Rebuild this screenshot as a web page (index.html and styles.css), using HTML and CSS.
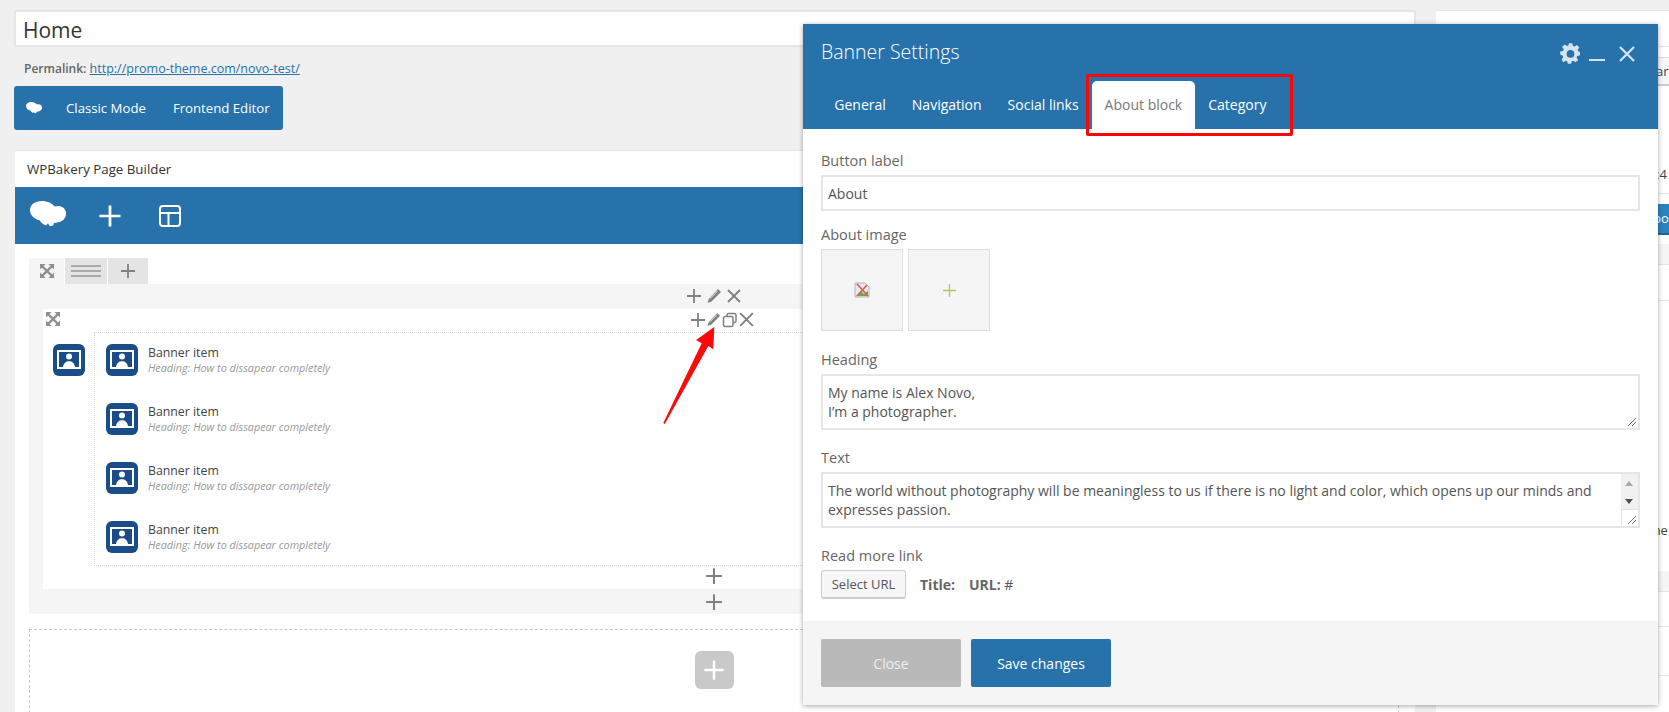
FILE: index.html
```html
<!DOCTYPE html>
<html lang="en">
<head>
  <meta charset="UTF-8">
  <meta name="viewport" content="width=device-width, initial-scale=1.0">
  <title>Edit Page</title>
  <link rel="stylesheet" href="styles.css">
</head>
<body>

  <svg class="defs" width="0" height="0">
    <symbol id="logo" viewBox="0 0 36 29">
      <path d="M12 0C5 0 0 3.800 0 9c0 5.200 4 9 9.500 10.200 1.500 2.400 3.800 4.300 6.800 5.300l1.600-2.300 1.900 3 3.300-.8 1-2.400c6.500-.2 12-3.400 12-9.300 0-4.700-3.200-7.800-8-7.800-1.200 0-2.400.2-3.500.6C22 2.300 17.500 0 12 0z"/>
    </symbol>
    <symbol id="plus" viewBox="0 0 16 16">
      <path d="M8 1v14M1 8h14" fill="none" stroke="currentColor" stroke-width="1.800"/>
    </symbol>
    <symbol id="pencil" viewBox="0 0 16 16">
      <path d="M12 1l3 3-9.500 9.500L1.500 15 3 10.500z" fill="currentColor"/>
      <path d="M3.800 10.800L11.500 3" stroke="#fff" stroke-width=".9"/>
    </symbol>
    <symbol id="close" viewBox="0 0 16 16">
      <path d="M2 2l12 12M14 2L2 14" fill="none" stroke="currentColor" stroke-width="1.800"/>
    </symbol>
    <symbol id="clone" viewBox="0 0 16 16">
      <path d="M5 4V3a1.500 1.500 0 0 1 1.500-1.500h6A1.500 1.500 0 0 1 14 3v6a1.500 1.500 0 0 1-1.500 1.500H11M3 4.500h6.500A1.500 1.500 0 0 1 11 6v7a1.500 1.500 0 0 1-1.500 1.500H3A1.500 1.500 0 0 1 1.500 13V6A1.500 1.500 0 0 1 3 4.500z" fill="none" stroke="currentColor" stroke-width="1.500"/>
    </symbol>
    <symbol id="expand" viewBox="0 0 15 15">
      <path d="M0 0h6L0 6zM15 0v6L9 0zM0 15V9l6 6zM15 15H9l6-6z" fill="currentColor"/>
      <path d="M2.500 2.500l10 10M12.500 2.500l-10 10" fill="none" stroke="currentColor" stroke-width="2.400"/>
    </symbol>
    <symbol id="banner" viewBox="0 0 32 32">
      <rect width="32" height="32" rx="6" fill="#1a4d87"/>
      <rect x="5" y="7" width="22" height="17" fill="none" stroke="#fff" stroke-width="2"/>
      <circle cx="16" cy="12.500" r="3" fill="#fff"/>
      <path d="M10 23c.6-3.800 3-5.800 6-5.800s5.400 2 6 5.800z" fill="#fff"/>
    </symbol>
  </svg>

  <div class="page">
    <main class="main-col">
      <div class="title-box">Home</div>
      <p class="permalink"><strong>Permalink:</strong> <a href="#">http://promo-theme.com/novo-test/</a></p>

      <div class="mode-bar">
        <svg class="mode-logo"><use href="#logo"/></svg>
        <span>Classic Mode</span>
        <span>Frontend Editor</span>
      </div>

      <section class="builder">
        <h2 class="builder-title">WPBakery Page Builder</h2>
        <div class="builder-nav">
          <svg class="nav-logo"><use href="#logo"/></svg>
          <svg class="nav-plus"><use href="#plus"/></svg>
          <svg class="nav-layout" viewBox="0 0 22 22">
            <rect x="1" y="1" width="20" height="20" rx="3" fill="none" stroke="#fff" stroke-width="2"/>
            <path d="M1 8h20M9.500 8v13" fill="none" stroke="#fff" stroke-width="2"/>
          </svg>
        </div>

        <div class="canvas">
          <div class="row-tabs">
            <span class="row-tab first"><svg class="ico-expand"><use href="#expand"/></svg></span>
            <span class="row-tab lines"><i></i><i></i><i></i></span>
            <span class="row-tab plus"><svg><use href="#plus"/></svg></span>
          </div>

          <div class="row">
            <div class="controls row-controls">
              <svg class="c-plus"><use href="#plus"/></svg>
              <svg class="c-pencil"><use href="#pencil"/></svg>
              <svg class="c-close"><use href="#close"/></svg>
            </div>

            <div class="column">
              <svg class="ico-expand col-expand"><use href="#expand"/></svg>
              <div class="controls col-controls">
                <svg class="c-plus"><use href="#plus"/></svg>
                <svg class="c-pencil"><use href="#pencil"/></svg>
                <svg class="c-clone"><use href="#clone"/></svg>
                <svg class="c-close"><use href="#close"/></svg>
              </div>

              <div class="col-body">
                <svg class="banner-ico parent-ico"><use href="#banner"/></svg>
                <div class="items">
                  <div class="item">
                    <svg class="banner-ico"><use href="#banner"/></svg>
                    <div class="item-text"><b>Banner item</b><em>Heading: How to dissapear completely</em></div>
                  </div>
                  <div class="item">
                    <svg class="banner-ico"><use href="#banner"/></svg>
                    <div class="item-text"><b>Banner item</b><em>Heading: How to dissapear completely</em></div>
                  </div>
                  <div class="item">
                    <svg class="banner-ico"><use href="#banner"/></svg>
                    <div class="item-text"><b>Banner item</b><em>Heading: How to dissapear completely</em></div>
                  </div>
                  <div class="item">
                    <svg class="banner-ico"><use href="#banner"/></svg>
                    <div class="item-text"><b>Banner item</b><em>Heading: How to dissapear completely</em></div>
                  </div>
                </div>
              </div>

              <div class="add-line inner-add"><svg><use href="#plus"/></svg></div>
            </div>

            <div class="add-line outer-add"><svg><use href="#plus"/></svg></div>
          </div>

          <div class="dropzone">
            <span class="big-add"><svg><use href="#plus"/></svg></span>
          </div>
        </div>
      </section>
    </main>

    <aside class="side-col">
      <div class="side-head"></div>
      <div class="side-select">ar</div>
      <div class="side-meta">:4</div>
      <div class="side-button">po</div>
      <div class="side-band first-band"></div>
      <div class="side-text">the</div>
      <div class="side-band second-band"></div>
      <div class="side-line"></div>
      <div class="side-line"></div>
    </aside>
  </div>

  <!-- Settings window -->
  <div class="modal">
    <div class="modal-head">
      <div class="modal-title-row">
        <h3>Banner Settings</h3>
        <div class="modal-icons">
          <svg class="m-gear" viewBox="0 0 24 24">
            <path d="M10 1h4l.7 3.200 1.900.8 2.800-1.800 2.800 2.800-1.800 2.800.8 1.900L23 11.400v3.800l-3.200.7-.8 1.900 1.800 2.800-2.800 2.800-2.800-1.800-1.900.8-.6 2.500h-3.800l-.7-2.500-1.900-.8-2.800 1.800L1.700 20l1.800-2.800-.8-1.900L0 14.600v-3.800l3.200-.7.800-1.900-1.800-2.800L5 2.600l2.800 1.800 1.900-.8z" transform="translate(.3 -.8) scale(.98)"/>
            <circle cx="12" cy="12.500" r="4.400" fill="#2772ab"/>
          </svg>
          <span class="m-min"></span>
          <svg class="m-close" viewBox="0 0 16 16"><path d="M1 1l14 14M15 1L1 15" fill="none" stroke="currentColor" stroke-width="2.200"/></svg>
        </div>
      </div>
      <ul class="modal-tabs">
        <li>General</li>
        <li>Navigation</li>
        <li>Social links</li>
        <li class="active">About block</li>
        <li>Category</li>
      </ul>
    </div>

    <div class="modal-body">
      <label class="field-label">Button label</label>
      <div class="field-input">About</div>

      <label class="field-label">About image</label>
      <div class="thumbs">
        <div class="thumb">
          <svg class="broken" viewBox="0 0 16 16">
            <path d="M1 1h10l4 4v10H1z" fill="#e8e8e8" stroke="#b5b5b5"/>
            <path d="M2 14l5-5 3 3 4-3v5z" fill="#6aa84f"/>
            <path d="M3 2l11 12M13 3L3 14" stroke="#e0605a" stroke-width="1.800"/>
          </svg>
        </div>
        <div class="thumb add-thumb"><svg viewBox="0 0 13 13"><path d="M6.500 0v13M0 6.500h13" stroke="#a9cc52" stroke-width="1.300"/></svg></div>
      </div>

      <label class="field-label">Heading</label>
      <div class="field-area">
        My name is Alex Novo,<br>I’m a photographer.
        <svg class="grip" viewBox="0 0 10 10"><path d="M9 1L1 9M9 5L5 9" stroke="#777" stroke-width="1"/></svg>
      </div>

      <label class="field-label">Text</label>
      <div class="field-area has-scroll">
        The world without photography will be meaningless to us if there is no light and color, which opens up our minds and expresses passion.
        <div class="scrollbar">
          <span class="arrow up"></span>
          <span class="arrow down"></span>
          <span class="corner"><svg class="grip" viewBox="0 0 10 10"><path d="M9 1L1 9M9 5L5 9" stroke="#777" stroke-width="1"/></svg></span>
        </div>
      </div>

      <label class="field-label">Read more link</label>
      <div class="link-row">
        <button class="url-btn">Select URL</button>
        <span class="link-info"><b>Title:</b></span>
        <span class="link-info"><b>URL:</b> #</span>
      </div>
    </div>

    <div class="modal-foot">
      <button class="foot-btn grey">Close</button>
      <button class="foot-btn blue">Save changes</button>
    </div>
  </div>

  <!-- Annotations drawn on top of the screenshot -->
  <div class="mark-box"></div>
  <svg class="mark-arrow" viewBox="0 0 60 110">
    <path d="M51.300 0L50.300 22.300 45.300 19 1.800 97 .3 96 38.700 16.300 33 13z" fill="#fa0a0a"/>
  </svg>

</body>
</html>
```

FILE: styles.css
```css
/* Reset and base styles */
* { margin: 0; padding: 0; box-sizing: border-box; }
html, body { width: 1669px; height: 712px; overflow: hidden; }
body { position: relative; background: #f0f0f0; font-family: "Open Sans", Arial, sans-serif; font-size: 13px; color: #555; }
.defs { position: absolute; }

.page { display: grid; grid-template-columns: 1402px 233px; column-gap: 20px; padding: 10px 0 0 14px; width: 1669px; height: 712px; overflow: hidden; }

/* Left column */
.title-box { height: 37px; border: 2px solid #e6e6e6; background: #fff; padding-left: 7px; font-size: 21px; line-height: 36px; color: #333; }
.permalink { margin-top: 13px; padding-left: 10px; font-size: 12.500px; line-height: 18px; color: #666; }
.permalink strong { font-size: 12px; font-weight: 600; }
.permalink a { color: #2772ab; }

.mode-bar { display: flex; align-items: center; width: 269px; height: 44px; margin-top: 8px; padding-left: 12px; background: #2772ab; border-radius: 3px; color: #fff; font-size: 13.200px; }
.mode-logo { width: 16px; height: 13px; fill: #fff; margin-right: 24px; }
.mode-bar span + span { margin-left: 27px; }

.builder { margin: 20px 0 0 1px; width: 1400px; height: 562px; background: #fff; border-top: 1px solid #e4e4e4; }
.builder-title { height: 36px; padding-left: 12px; font-size: 13.300px; font-weight: 500; line-height: 37px; color: #333; }
.builder-nav { display: flex; align-items: center; height: 57px; padding-left: 15px; background: #2772ab; }
.nav-logo { width: 36px; height: 29px; fill: #fff; }
.nav-plus { width: 24px; height: 24px; margin-left: 32px; color: #fff; }
.nav-layout { width: 22px; height: 22px; margin-left: 37px; }

.canvas { padding: 14px 14px 0; width: 1398px; }
.row-tabs { display: flex; height: 26px; }
.row-tab { display: flex; align-items: center; justify-content: center; background: #e4e4e4; margin-right: 1px; }
.row-tab.first { width: 35px; background: #f5f5f5; color: #8f8f8f; }
.row-tab.lines { width: 42px; flex-direction: column; gap: 3px; }
.row-tab.lines i { display: block; width: 30px; height: 2px; background: #aaa; }
.row-tab.plus { width: 40px; color: #808080; }
.row-tab.plus svg { width: 16px; height: 16px; }
.ico-expand { width: 14px; height: 14px; color: #8f8f8f; }

.row { height: 330px; background: #f5f5f5; padding: 0 0 0 14px; }
.controls { display: flex; align-items: center; justify-content: center; color: #808080; }
.row-controls { height: 25px; margin-left: -14px; padding-bottom: 2px; gap: 4px; }
.row-controls svg { width: 16px; height: 16px; }

.column { position: relative; height: 280px; background: #fff; }
.col-expand { position: absolute; left: 3px; top: 3px; }
.col-controls { height: 23px; padding: 0 0 2px 2px; }
.col-controls .c-plus { width: 16px; height: 16px; }
.col-controls .c-pencil { width: 15px; height: 15px; }
.col-controls .c-clone { width: 16px; height: 16px; margin-left: 1px; }
.col-controls .c-close { width: 17px; height: 17px; }

.col-body { display: flex; padding-left: 10px; }
.banner-ico { width: 32px; height: 32px; flex: none; }
.parent-ico { margin-top: 12px; }
.items { flex: 1; height: 234px; margin-left: 9px; border: 1px dotted #d4d4d4; padding: 11px 0 0 11px; display: flex; flex-direction: column; gap: 27px; }
.item { display: flex; align-items: center; gap: 10px; }
.item-text b { display: block; font-weight: 400; font-size: 12.300px; line-height: 15px; color: #444; }
.item-text em { display: block; font-size: 10.800px; line-height: 15px; color: #999; }

.add-line { display: flex; justify-content: center; color: #808080; }
.add-line svg { width: 18px; height: 18px; }
.inner-add { margin-left: -14px; padding-top: 1px; height: 23px; }
.outer-add { margin-left: -14px; padding-top: 4px; }

.dropzone { display: flex; justify-content: center; height: 120px; margin-top: 15px; padding-top: 21px; border: 1px dashed #c8c8c8; background: #fff; }
.big-add { display: flex; align-items: center; justify-content: center; width: 39px; height: 38px; background: #c9c9c9; border-radius: 6px; color: #fff; }
.big-add svg { width: 22px; height: 22px; }

/* Right column, mostly hidden by the window */
.side-col { background: #fff; height: 702px; border-top: 1px solid #e6e6e6; font-size: 13px; color: #444; overflow: hidden; }
.side-head { height: 36px; border-bottom: 1px solid #e6e6e6; }
.side-select { height: 29px; margin: 10px 0 0 0; padding-left: 220px; background: #f7f7f7; border-top: 1px solid #ddd; border-bottom: 2px solid #ccc; line-height: 26px; }
.side-meta { height: 108px; padding: 78px 0 0 220px; border-bottom: 1px solid #e6e6e6; line-height: 20px; }
.side-button { height: 31px; margin-top: 10px; padding-left: 217px; background: #2b83bd; border-bottom: 2px solid #23679a; color: #fff; line-height: 28px; }
.side-band { height: 21px; background: #f5f5f5; border-bottom: 1px solid #e6e6e6; }
.first-band { margin-top: 9px; margin-bottom: 36px; }
.side-text { height: 271px; border-top: 1px solid #e6e6e6; padding: 219px 0 0 212px; margin-top: -1px; line-height: 20px; }
.second-band { margin-bottom: 34px; }
.side-line { height: 49px; border-top: 1px solid #e6e6e6; }

/* Settings window */
.modal { position: absolute; left: 803px; top: 24px; width: 855px; height: 681px; display: flex; flex-direction: column; background: #fff; box-shadow: 0 1px 5px rgba(0,0,0,0.35); }
.modal-head { height: 105px; background: #2772ab; color: #fff; }
.modal-title-row { display: flex; justify-content: space-between; height: 57px; padding: 13px 23px 0 18px; }
.modal-title-row h3 { font-size: 19.500px; font-weight: 300; line-height: 30px; }
.modal-icons { display: flex; align-items: flex-start; color: #d6e4f0; }
.m-gear { width: 21px; height: 21px; margin-top: 6px; fill: #d6e4f0; }
.m-min { width: 16px; height: 2px; margin: 22px 0 0 8px; background: #d6e4f0; }
.m-close { width: 16px; height: 16px; margin: 9px 0 0 14px; }
.modal-tabs { display: flex; list-style: none; padding-left: 18.300px; height: 48px; }
.modal-tabs li { padding: 0 13px; font-size: 14px; line-height: 48px; }
.modal-tabs li.active { background: #fff; color: #777; border-radius: 5px 5px 0 0; }

.modal-body { flex: 1; padding: 22px 18px 0 18px; font-size: 14px; }
.field-label { display: block; font-size: 14.500px; font-weight: 500; line-height: 19px; color: #666; margin-bottom: 5px; }
.field-input { height: 36px; border: 2px solid #e6e6e6; padding-left: 5px; line-height: 34px; margin-bottom: 14px; }
.thumbs { display: flex; gap: 5px; margin-bottom: 19px; }
.thumb { display: flex; align-items: center; justify-content: center; width: 82px; height: 82px; background: #f5f5f5; border: 1px solid #ddd; }
.broken { width: 16px; height: 16px; }
.add-thumb svg { width: 13px; height: 13px; }
.field-area { position: relative; height: 56px; border: 2px solid #e6e6e6; padding: 7px 5px; line-height: 19px; margin-bottom: 18px; }
.grip { position: absolute; right: 1px; bottom: 1px; width: 10px; height: 10px; }
.has-scroll { padding-right: 40px; margin-bottom: 18px; }
.scrollbar { position: absolute; right: 0; top: 0; bottom: 0; width: 17px; background: #f1f1f1; }
.arrow { position: absolute; left: 4px; width: 0; height: 0; border-left: 4px solid transparent; border-right: 4px solid transparent; }
.arrow.up { top: 7px; border-bottom: 5px solid #aaa; }
.arrow.down { top: 25px; border-top: 5px solid #505050; }
.corner { position: absolute; left: 0; right: 0; bottom: 0; height: 17px; background: #fff; border-left: 1px solid #e3e3e3; border-top: 1px solid #e3e3e3; }

.link-row { display: flex; align-items: center; }
.url-btn { width: 85px; height: 29px; background: #f7f7f7; border: 1px solid #ccc; border-bottom: 2px solid #ccc; border-radius: 3px; font: 13px "Open Sans", Arial, sans-serif; color: #555; }
.link-info { margin-left: 14px; }
.link-info b { font-weight: 700; color: #666; }

.modal-foot { display: flex; gap: 10px; height: 84px; padding: 18px 18px 0; background: #f5f5f5; }
.foot-btn { width: 140px; height: 48px; border: none; border-radius: 2px; font: 14px "Open Sans", Arial, sans-serif; color: #fff; }
.foot-btn.grey { background: #b9b9b9; color: #eee; }
.foot-btn.blue { background: #2772ab; }

/* Red annotations */
.mark-box { position: absolute; left: 1086px; top: 74px; width: 207px; height: 62px; border: 3px solid #f80808; border-radius: 2px; }
.mark-arrow { position: absolute; left: 663px; top: 327px; width: 60px; height: 110px; overflow: visible; }
```
